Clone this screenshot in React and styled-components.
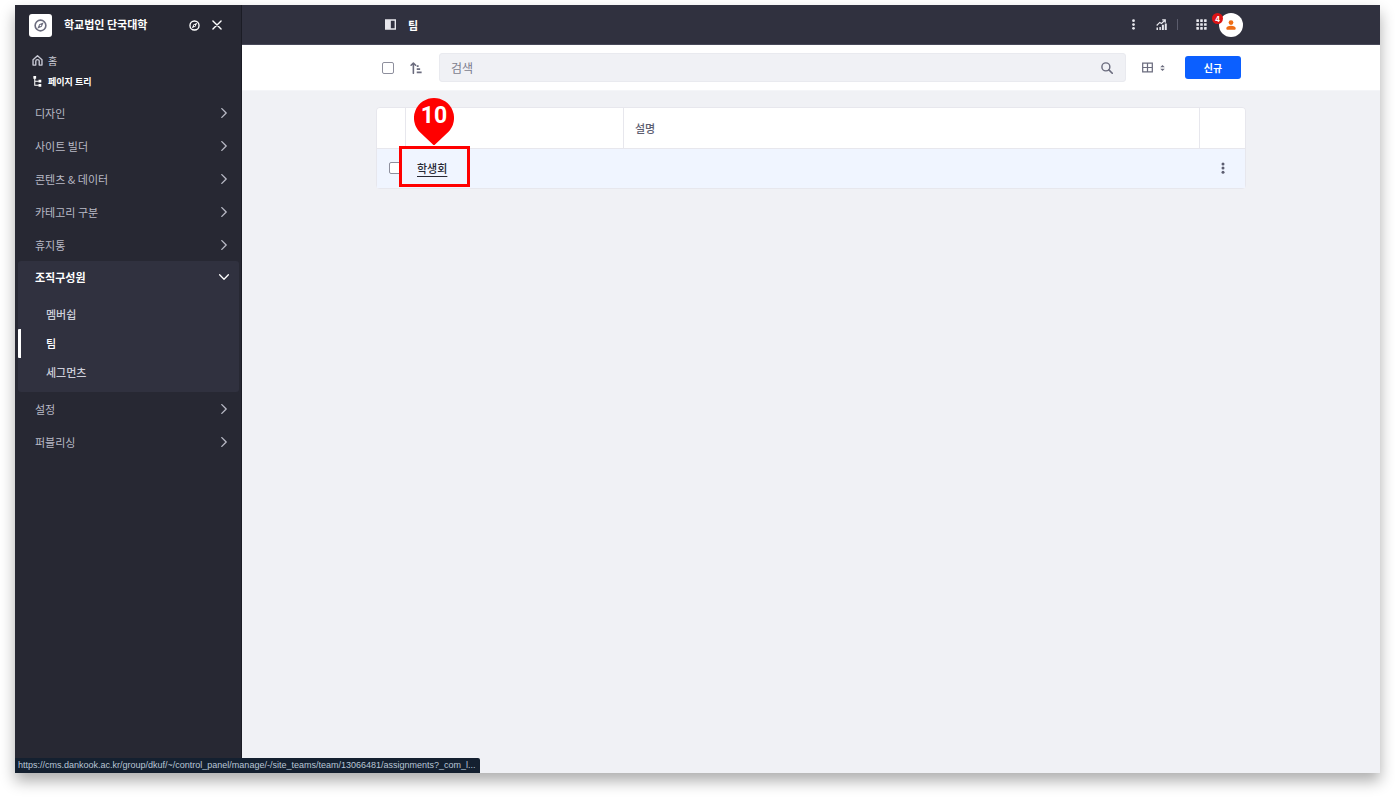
import React from "react";
import styled, { createGlobalStyle } from "styled-components";

const Global = createGlobalStyle`
  *, *::before, *::after { box-sizing: border-box; }
  body { margin: 0; background: #fff; }
  body, button, input {
    font-family: "Noto Sans CJK KR", "Liberation Sans", sans-serif;
    font-size: 11px;
    line-height: 16px;
  }
  button { border: 0; padding: 0; background: none; color: inherit; cursor: pointer; }
  a { color: inherit; text-decoration: none; }
  svg { display: block; }
`;

const Page = styled.div`
  min-height: 100vh;
  padding: 5px 15px 25px;
  display: flex;
`;

const Frame = styled.div`
  position: relative;
  flex: 1;
  min-width: 0;
  display: flex;
  background: #f0f1f5;
  box-shadow: 0 8px 14px rgba(0, 0, 0, 0.32);
`;

const Sidebar = styled.aside`
  flex: 0 0 227px;
  background: #272833;
  border-right: 1px solid #1b1c25;
  color: #b9bac6;
`;

const SiteHeader = styled.div`
  height: 40px;
  padding: 0 17px 0 14px;
  display: flex;
  align-items: center;
  color: #fff;
`;

const SiteLogo = styled.span`
  width: 23px;
  height: 23px;
  margin-right: 12px;
  border-radius: 3px;
  background: #fff;
  color: #6b6c7e;
  display: grid;
  place-items: center;
`;

const SiteName = styled.strong`
  flex: 1;
  padding-bottom: 2px;
  font-weight: 700;
`;

const IconButton = styled.button`
  width: ${(p) => p.$w || 24}px;
  height: 24px;
  display: grid;
  place-items: center;
  flex: none;
`;

const QuickLinks = styled.div`
  padding: 5px 17px 0;
  height: 51px;
`;

const QuickLink = styled.a`
  height: 21px;
  display: flex;
  align-items: center;
  gap: 5px;
  font-size: ${(p) => (p.$strong ? 9 : 10)}px;
  font-weight: ${(p) => (p.$strong ? 700 : 400)};
  color: ${(p) => (p.$strong ? "#fff" : "#c9cad6")};
`;

const MenuButton = styled.button`
  width: 100%;
  height: 33px;
  padding: 0 12px 0 20px;
  display: flex;
  align-items: center;
  justify-content: space-between;
  text-align: left;
  color: #b9bac6;
`;

const MenuGroup = styled.div`
  margin: 0 2px 0 3px;
  padding-bottom: 5px;
  border-radius: 3px;
  background: #30313f;

  ${MenuButton} {
    padding: 0 10px 2px 17px;
    font-weight: 700;
    color: #fff;
  }
`;

const SubMenu = styled.div`
  padding-top: 6px;
`;

const SubLink = styled.a`
  height: 29px;
  padding: 0 0 2px 25px;
  display: flex;
  align-items: center;
  font-weight: 500;
  color: ${(p) => (p.$active ? "#fff" : "#cdced9")};
  border-left: 3px solid ${(p) => (p.$active ? "#fff" : "transparent")};
  border-radius: 1px;
`;

const Main = styled.main`
  flex: 1;
  min-width: 0;
`;

const TopBar = styled.header`
  height: 40px;
  background: #30313f;
  border-bottom: 1px solid #484959;
  color: #e7e7ed;
`;

const Container = styled.div`
  max-width: 870px;
  height: 100%;
  margin: 0 auto;
  display: flex;
  align-items: center;
`;

const PageTitle = styled.h1`
  margin: 0;
  padding-left: 4px;
  flex: 1;
  font-size: 11px;
  font-weight: 700;
  color: #fff;
`;

const Divider = styled.span`
  width: 1px;
  height: 11px;
  margin: 0 11px 0 4px;
  background: #5b5c6c;
`;

const AvatarButton = styled.button`
  position: relative;
  width: 24px;
  height: 24px;
  margin: 0 3px 0 6px;
  border-radius: 50%;
  background: #fff;
  color: #ee6c14;
  display: grid;
  place-items: center;
`;

const Count = styled.span`
  position: absolute;
  left: -7px;
  top: 0;
  width: 11px;
  height: 11px;
  border-radius: 50%;
  background: #da1414;
  color: #fff;
  font-size: 8px;
  line-height: 11px;
  font-weight: 700;
  text-align: center;
`;

const Toolbar = styled.div`
  height: 46px;
  background: #fff;
  border-bottom: 1px solid #f4f5f8;
  color: #6b6c7e;
`;

const CheckBox = styled.input.attrs({ type: "checkbox" })`
  appearance: none;
  display: block;
  flex: none;
  width: 12px;
  height: 12px;
  margin: 0;
  border: 1px solid #8e8f9d;
  border-radius: 2px;
  background: #fff;
`;

const SelectAll = styled(CheckBox)`
  margin: 0 10px 0 6px;
`;

const SearchBox = styled.label`
  flex: 1;
  height: 29px;
  margin: 0 10px 0 11px;
  padding: 0 6px 0 11px;
  display: flex;
  align-items: center;
  border: 1px solid #e9eaef;
  border-radius: 3px;
  background: #f0f1f5;
`;

const SearchInput = styled.input`
  flex: 1;
  min-width: 0;
  padding: 0;
  border: 0;
  outline: 0;
  background: none;
  font-size: 12px;
  color: #272833;

  &::placeholder { color: #7c7d8d; opacity: 1; }
`;

const ViewButton = styled.button`
  width: 34px;
  height: 24px;
  margin-right: 15px;
  padding-left: 1px;
  display: flex;
  align-items: center;
  justify-content: center;
  gap: 7px;
`;

const NewButton = styled.button`
  width: 56px;
  height: 23px;
  margin-right: 5px;
  border-radius: 3px;
  background: #0b5fff;
  color: #fff;
  font-size: 10px;
  font-weight: 700;
`;

const Content = styled.div`
  max-width: 870px;
  margin: 0 auto;
  padding: 16px 0;
`;

const Table = styled.table`
  width: 100%;
  table-layout: fixed;
  border: 1px solid #e7e7ed;
  border-radius: 4px;
  border-spacing: 0;
  color: #5c5d70;
  text-align: left;
`;

const Column = styled.col`
  width: ${(p) => p.$w || "auto"};
`;

const HeadCell = styled.th`
  height: 41px;
  padding: 0 11px;
  background: #fff;
  border-bottom: 1px solid #e7e7ed;
  font-weight: 500;

  & + & { border-left: 1px solid #e7e7ed; }
  &:first-child { border-top-left-radius: 3px; }
  &:last-child { border-top-right-radius: 3px; }
`;

const Cell = styled.td`
  position: relative;
  height: 39px;
  padding: 0 10px 2px 12px;
  background: #f0f5ff;
`;

const TeamLink = styled.a`
  color: #272833;
  font-weight: 500;
  text-decoration: underline;
  text-underline-offset: 3px;
`;

const Callout = styled.div`
  position: absolute;
  left: -6px;
  top: -3px;
  width: 71px;
  height: 41px;
  border: 3px solid #f00;
  pointer-events: none;
`;

const Pin = styled.div`
  position: absolute;
  left: 12px;
  bottom: 39px;
  width: 40px;
  height: 47px;
`;

const PinNumber = styled.span`
  position: absolute;
  inset: 0;
  font-family: Roboto, sans-serif;
  font-size: 23px;
  line-height: 35px;
  font-weight: 700;
  text-align: center;
  color: #fff;
`;

const StatusBar = styled.div`
  position: absolute;
  left: 0;
  bottom: 0;
  height: 15px;
  padding: 0 4px 0 3px;
  border-radius: 0 2px 0 0;
  background: #142030;
  color: #b9c6d6;
  font-family: "Liberation Sans", sans-serif;
  font-size: 9px;
  line-height: 15px;
  white-space: nowrap;
`;

const Svg = ({ size = 12, children, ...rest }) => (
  <svg width={size} height={size} viewBox="0 0 16 16" fill="none" stroke="currentColor" aria-hidden="true" {...rest}>
    {children}
  </svg>
);

const Compass = ({ size }) => (
  <Svg size={size}>
    <circle cx="8" cy="8" r="6.6" strokeWidth="2" />
    <path fillRule="evenodd" d="M12 4 9.6 9.6 4 12l2.4-5.6zM8 7a1 1 0 1 0 0 2 1 1 0 0 0 0-2z" fill="currentColor" stroke="none" />
  </Svg>
);

const Close = () => (
  <Svg size={10}><path d="m1.5 1.5 13 13m0-13-13 13" strokeWidth="2.2" strokeLinecap="round" /></Svg>
);

const Home = () => (
  <Svg size={11}>
    <path d="M1.500 6.800 8 1.200l6.500 5.600v7.900h-4V9.200a2.500 2.500 0 0 0-5 0v5.500h-4z" strokeWidth="2" strokeLinejoin="round" />
  </Svg>
);

const Tree = () => (
  <Svg size={11}>
    <path d="M4 3v10.500h6M4 7.500h6" strokeWidth="1.500" />
    <path d="M2 0h4v4H2zM9.500 5.500h4v4h-4zM9.500 11.500h4v4h-4z" fill="currentColor" stroke="none" />
  </Svg>
);

const Chevron = ({ open }) => (
  <Svg size={10}>
    <path d={open ? "m1 4.500 7 7 7-7" : "m4.500 1 7 7-7 7"} strokeWidth="2.1" strokeLinecap="round" strokeLinejoin="round" />
  </Svg>
);

const PanelIcon = () => (
  <Svg size={11}>
    <path d="M1 1.500h14v13H1z" strokeWidth="2" />
    <path d="M1 1.500h7.500v13H1z" fill="currentColor" stroke="none" />
  </Svg>
);

const Dots = ({ size = 12 }) => (
  <Svg size={size} fill="currentColor" stroke="none">
    <circle cx="8" cy="2.500" r="2" /><circle cx="8" cy="8" r="2" /><circle cx="8" cy="13.500" r="2" />
  </Svg>
);

const Analytics = () => (
  <Svg size={11}>
    <path d="M1.800 12.500V16M6 11.500V16" strokeWidth="2.200" />
    <path d="M10 8.500V16M14.200 6.500V16" strokeWidth="2.900" />
    <path d="M1 9.500 5.500 5l2.500 1.500L13 1.800M9 1.200h4.500v4.300" strokeWidth="1.700" />
  </Svg>
);

const Apps = () => (
  <Svg size={11} fill="currentColor" stroke="none">
    {[0.5, 6.1, 11.7].map((y) => [0.5, 6.1, 11.7].map((x) => (
      <rect key={`${x}-${y}`} x={x} y={y} width="3.800" height="3.800" rx="0.500" />
    )))}
  </Svg>
);

const Person = () => (
  <Svg size={10} fill="currentColor" stroke="none">
    <circle cx="8" cy="4" r="3.800" />
    <path d="M0.500 13.500C0.500 10.500 3.500 9 8 9s7.500 1.500 7.500 4.500c0 1.700-1 2-2.500 2H3c-1.500 0-2.500-.3-2.500-2z" />
  </Svg>
);

const SortUp = () => (
  <Svg size={12}>
    <path d="M4.500 15V2M1.500 4.300l3-2.800 3 2.800" strokeWidth="2.100" strokeLinecap="round" strokeLinejoin="round" />
    <path d="M9 5.500h2.500M9 9.500h4.500M9 13.800h6.500" strokeWidth="2.100" />
  </Svg>
);

const SearchIcon = () => (
  <Svg size={12}>
    <circle cx="6.500" cy="6.500" r="5.300" strokeWidth="1.900" />
    <path d="m10.500 10.500 4.500 4.500" strokeWidth="2.200" strokeLinecap="round" />
  </Svg>
);

const TableIcon = () => (
  <Svg size={11}>
    <path d="M1 1.500h14v13H1zM8 1.500v13M1 8h14" strokeWidth="1.800" />
  </Svg>
);

const DoubleCaret = () => (
  <svg width="5" height="6" viewBox="0 0 5 6" fill="currentColor" aria-hidden="true">
    <path d="M2.500 0 4.800 2.200H.2zM2.500 6 .2 3.800h4.600z" />
  </svg>
);

const PinShape = () => (
  <svg width="40" height="47" viewBox="0 0 40 47" fill="#f00" aria-hidden="true">
    <path d="M20 0a20 20 0 0 1 14.300 34L20 47.500 5.700 34A20 20 0 0 1 20 0z" />
  </svg>
);

const topMenus = ["디자인", "사이트 빌더", "콘텐츠 & 데이터", "카테고리 구분", "휴지통"];
const bottomMenus = ["설정", "퍼블리싱"];
const memberLinks = ["멤버쉽", "팀", "세그먼츠"];

const MenuItem = ({ label, open = false }) => (
  <MenuButton type="button" aria-expanded={open}>
    {label}
    <Chevron open={open} />
  </MenuButton>
);

export default function App() {
  return (
    <Page>
      <Global />
      <Frame>
        <Sidebar>
          <SiteHeader>
            <SiteLogo><Compass size={13} /></SiteLogo>
            <SiteName>학교법인 단국대학</SiteName>
            <IconButton type="button" $w={32} aria-label="사이트 선택"><Compass size={11} /></IconButton>
            <IconButton type="button" $w={14} aria-label="닫기"><Close /></IconButton>
          </SiteHeader>
          <QuickLinks>
            <QuickLink href="#home"><Home />홈</QuickLink>
            <QuickLink href="#tree" $strong><Tree />페이지 트리</QuickLink>
          </QuickLinks>
          <nav>
            {topMenus.map((label) => <MenuItem key={label} label={label} />)}
            <MenuGroup>
              <MenuItem label="조직구성원" open />
              <SubMenu>
                {memberLinks.map((label) => (
                  <SubLink key={label} href="#members" $active={label === "팀"}>{label}</SubLink>
                ))}
              </SubMenu>
            </MenuGroup>
            {bottomMenus.map((label) => <MenuItem key={label} label={label} />)}
          </nav>
        </Sidebar>

        <Main>
          <TopBar>
            <Container>
              <IconButton type="button" $w={28} aria-label="메뉴 전환"><PanelIcon /></IconButton>
              <PageTitle>팀</PageTitle>
              <IconButton type="button" $w={32} aria-label="옵션"><Dots size={11} /></IconButton>
              <IconButton type="button" $w={24} aria-label="분석"><Analytics /></IconButton>
              <Divider />
              <IconButton type="button" $w={24} aria-label="애플리케이션"><Apps /></IconButton>
              <AvatarButton type="button" aria-label="사용자 프로필">
                <Person />
                <Count>4</Count>
              </AvatarButton>
            </Container>
          </TopBar>
          <Toolbar>
            <Container>
              <SelectAll aria-label="모두 선택" />
              <IconButton type="button" aria-label="정렬"><SortUp /></IconButton>
              <SearchBox>
                <SearchInput type="text" placeholder="검색" aria-label="검색" />
                <IconButton type="button" aria-label="검색"><SearchIcon /></IconButton>
              </SearchBox>
              <ViewButton type="button" aria-label="보기 방식"><TableIcon /><DoubleCaret /></ViewButton>
              <NewButton type="button">신규</NewButton>
            </Container>
          </Toolbar>
          <Content>
            <Table>
              <colgroup>
                <Column $w="28px" />
                <Column $w="218px" />
                <Column />
                <Column $w="46px" />
              </colgroup>
              <thead>
                <tr>
                  <HeadCell />
                  <HeadCell />
                  <HeadCell scope="col">설명</HeadCell>
                  <HeadCell />
                </tr>
              </thead>
              <tbody>
                <tr>
                  <Cell><CheckBox aria-label="학생회 선택" /></Cell>
                  <Cell>
                    <TeamLink href="#team">학생회</TeamLink>
                    <Callout>
                      <Pin>
                        <PinShape />
                        <PinNumber>10</PinNumber>
                      </Pin>
                    </Callout>
                  </Cell>
                  <Cell />
                  <Cell><IconButton type="button" aria-label="작업"><Dots /></IconButton></Cell>
                </tr>
              </tbody>
            </Table>
          </Content>
        </Main>
        <StatusBar>https://cms.dankook.ac.kr/group/dkuf/~/control_panel/manage/-/site_teams/team/13066481/assignments?_com_l...</StatusBar>
      </Frame>
    </Page>
  );
}
